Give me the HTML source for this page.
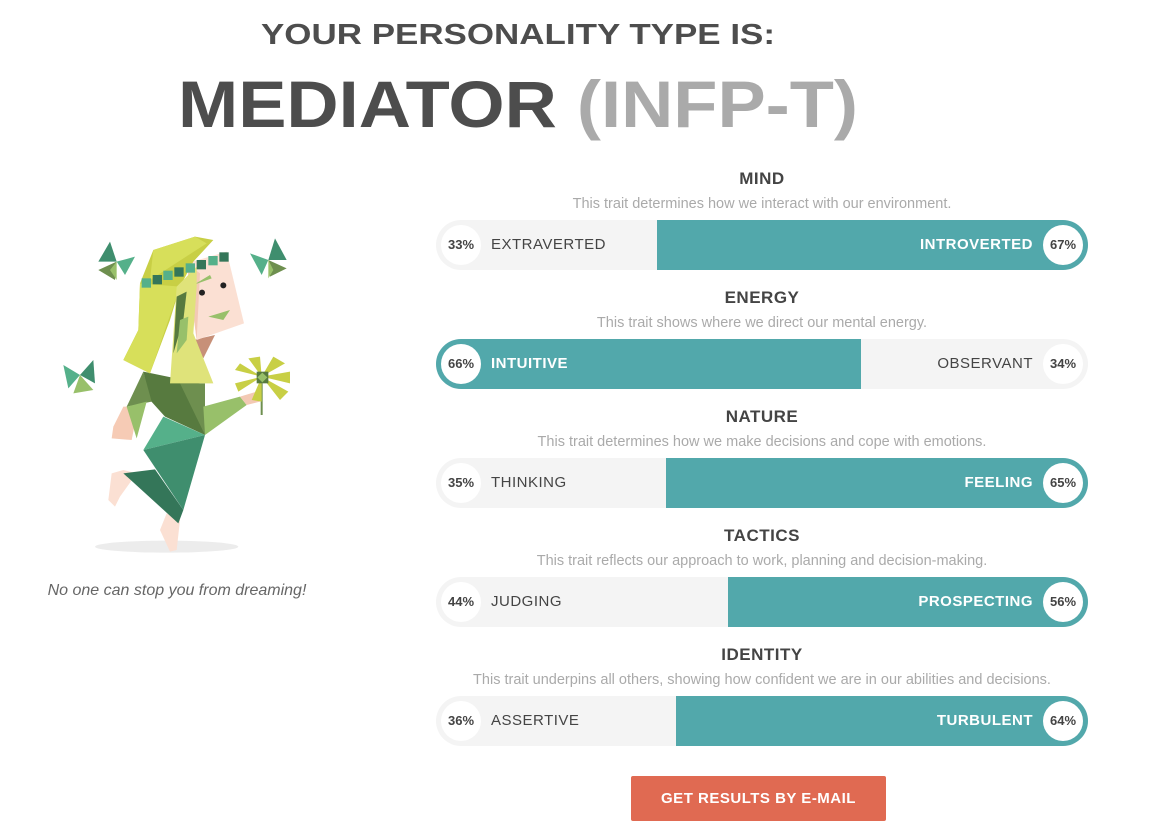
<!DOCTYPE html>
<html><head><meta charset="utf-8"><style>
body{margin:0;width:1176px;height:833px;background:#fff;position:relative;overflow:hidden;font-family:"Liberation Sans",sans-serif}
.abs{position:absolute}
.h{position:absolute;left:436px;width:652px;text-align:center;font-weight:bold;font-size:17px;color:#444;letter-spacing:.5px}
.s{position:absolute;left:436px;width:652px;text-align:center;font-size:14.5px;color:#aaa}
.bar{position:absolute;left:436px;width:652px;height:50px;border-radius:25px;overflow:hidden;background:#f4f4f4}
.bar .t{position:absolute;top:0;height:50px;background:#52a8ab}
.c{position:absolute;top:5px;width:40px;height:40px;border-radius:20px;background:#fff;font-size:13px;font-weight:bold;color:#444;text-align:center;line-height:40px}
.l{position:absolute;top:0;line-height:50px;font-size:15px;color:#444;letter-spacing:.5px}
.w{color:#fff;font-weight:bold}
</style></head><body>
<svg class="abs" style="left:0;top:0" width="1176" height="150">
<text x="261" y="44" textLength="514" lengthAdjust="spacingAndGlyphs" font-family="Liberation Sans" font-weight="bold" font-size="29" fill="#4d4d4d">YOUR PERSONALITY TYPE IS:</text>
<text x="178" y="127" textLength="680" lengthAdjust="spacingAndGlyphs" font-family="Liberation Sans" font-weight="bold" font-size="66" fill="#4d4d4d">MEDIATOR <tspan fill="#aaa">(INFP-T)</tspan></text>
</svg>

<svg class="abs" style="left:40px;top:220px" width="280" height="340" viewBox="0 0 840 1020">
<ellipse cx="380" cy="980" rx="215" ry="18" fill="#ececec"/>
<g><polygon points="210,65 230,125 175,125" fill="#3f8e6e"/><polygon points="230,125 285,110 255,165" fill="#55b08a"/><polygon points="230,125 175,150 225,180" fill="#6e8f4f"/><polygon points="230,125 210,150 230,180" fill="#98c06a"/></g>
<g><polygon points="705,55 740,120 685,120" fill="#3f8e6e"/><polygon points="685,120 630,100 665,165" fill="#55b08a"/><polygon points="685,120 740,145 690,170" fill="#6e8f4f"/><polygon points="685,120 685,175 700,150" fill="#98c06a"/></g>
<g><polygon points="160,420 165,490 120,465" fill="#3f8e6e"/><polygon points="120,465 70,435 85,505" fill="#55b08a"/><polygon points="120,465 100,520 160,510" fill="#98c06a"/></g>
<polygon points="250,560 295,560 275,660 215,655 220,620" fill="#f6cbb5"/>
<polygon points="250,750 290,760 240,830 225,860 205,840 215,760" fill="#fbe0d3"/>
<polygon points="380,880 420,900 410,990 390,995 360,930" fill="#fbe0d3"/>
<polygon points="310,455 480,490 495,645 375,590 330,540" fill="#577a3f"/>
<polygon points="260,560 310,455 335,545" fill="#6e8f4f"/>
<polygon points="260,560 320,545 290,655" fill="#98c06a"/>
<polygon points="420,490 495,490 495,645" fill="#6e8f4f"/>
<polygon points="490,560 600,530 620,555 495,645" fill="#98c06a"/>
<polygon points="600,530 650,515 660,545 620,555" fill="#f3c9b4"/>
<polygon points="370,590 495,645 310,690" fill="#55b08a"/>
<polygon points="310,690 495,645 430,870" fill="#3f8e6e"/>
<polygon points="250,760 345,748 430,870 415,910" fill="#347659"/>
<polygon points="460,360 525,345 490,415" fill="#c79078"/>
<polygon points="440,130 560,95 612,310 470,360" fill="#fbe0d3"/>
<polygon points="440,130 480,160 470,360" fill="#f3c9b4"/>
<circle cx="486" cy="218" r="9" fill="#222"/><circle cx="550" cy="196" r="9" fill="#222"/>
<polygon points="505,290 570,270 550,300" fill="#98c06a"/>
<polygon points="460,195 510,165 515,175" fill="#98c06a"/>
<polygon points="340,90 465,50 520,60 460,125 420,200 390,300 330,460 250,420 295,330 300,190" fill="#c8cf45"/>
<polygon points="300,190 420,200 330,460 250,420 295,330" fill="#d7df5a"/>
<polygon points="410,200 470,140 470,200 460,340 520,490 390,490" fill="#dfe37a"/>
<polygon points="410,230 440,215 430,300 400,400" fill="#577a3f"/>
<polygon points="420,300 445,290 440,360 410,400" fill="#98c06a"/>
<polygon points="340,90 465,50 500,70 330,180" fill="#d7df5a"/>
<g fill="#55b08a"><rect x="305" y="175" width="28" height="28"/><rect x="370" y="152" width="28" height="28"/><rect x="437" y="130" width="28" height="28"/><rect x="505" y="108" width="28" height="28"/></g>
<g fill="#347659"><rect x="338" y="165" width="28" height="28"/><rect x="403" y="142" width="28" height="28"/><rect x="470" y="120" width="28" height="28"/><rect x="538" y="97" width="28" height="28"/></g>
<rect x="662" y="490" width="6" height="95" fill="#6e8f4f"/>
<g fill="#c8cf45"><polygon points="665,470 625,415 660,410"/><polygon points="665,470 700,410 735,430"/><polygon points="665,470 750,455 750,490"/><polygon points="665,470 745,515 720,540"/><polygon points="665,470 665,545 635,540"/><polygon points="665,470 595,515 585,490"/><polygon points="665,470 585,450 600,430"/></g>
<polygon points="650,455 685,455 685,490 650,490" fill="#577a3f"/>
<polygon points="667,458 682,472 667,487 652,472" fill="#98c06a"/>
</svg>
<div class="abs" style="left:0;width:354px;top:582px;text-align:center;font-style:italic;font-size:16px;color:#666">No one can stop you from dreaming!</div>

<div class="h" style="top:169px">MIND</div>
<div class="s" style="top:196px">This trait determines how we interact with our environment.</div>
<div class="bar" style="top:220px"><div class="t" style="left:221px;right:0"></div><div class="c" style="left:5px">33%</div><div class="l" style="left:55px">EXTRAVERTED</div><div class="l w" style="right:55px">INTROVERTED</div><div class="c" style="right:5px">67%</div></div>

<div class="h" style="top:288px">ENERGY</div>
<div class="s" style="top:315px">This trait shows where we direct our mental energy.</div>
<div class="bar" style="top:339px"><div class="t" style="left:0;width:425px"></div><div class="c" style="left:5px">66%</div><div class="l w" style="left:55px">INTUITIVE</div><div class="l" style="right:55px">OBSERVANT</div><div class="c" style="right:5px">34%</div></div>

<div class="h" style="top:407px">NATURE</div>
<div class="s" style="top:434px">This trait determines how we make decisions and cope with emotions.</div>
<div class="bar" style="top:458px"><div class="t" style="left:230px;right:0"></div><div class="c" style="left:5px">35%</div><div class="l" style="left:55px">THINKING</div><div class="l w" style="right:55px">FEELING</div><div class="c" style="right:5px">65%</div></div>

<div class="h" style="top:526px">TACTICS</div>
<div class="s" style="top:553px">This trait reflects our approach to work, planning and decision-making.</div>
<div class="bar" style="top:577px"><div class="t" style="left:292px;right:0"></div><div class="c" style="left:5px">44%</div><div class="l" style="left:55px">JUDGING</div><div class="l w" style="right:55px">PROSPECTING</div><div class="c" style="right:5px">56%</div></div>

<div class="h" style="top:645px">IDENTITY</div>
<div class="s" style="top:672px">This trait underpins all others, showing how confident we are in our abilities and decisions.</div>
<div class="bar" style="top:696px"><div class="t" style="left:240px;right:0"></div><div class="c" style="left:5px">36%</div><div class="l" style="left:55px">ASSERTIVE</div><div class="l w" style="right:55px">TURBULENT</div><div class="c" style="right:5px">64%</div></div>

<div class="abs" style="left:631px;top:776px;width:255px;height:45px;background:#e06a52;border-radius:2px;color:#fff;font-weight:bold;font-size:15px;line-height:45px;text-align:center;letter-spacing:.5px">GET RESULTS BY E-MAIL</div>
</body></html>
